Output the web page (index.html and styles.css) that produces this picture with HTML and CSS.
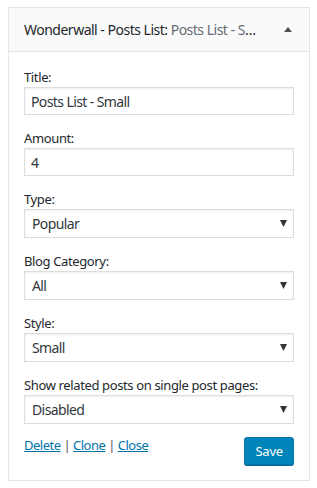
FILE: index.html
```html
<!DOCTYPE html>
<html lang="en">
<head>
    <meta charset="UTF-8">
    <meta name="viewport" content="width=device-width, initial-scale=1.0">
    <title>Posts List widget</title>
    <link rel="stylesheet" href="styles.css">
</head>
<body>
    <div class="widget">
        <div class="widget-top">
            <h3 class="widget-title">Wonderwall - Posts List:<span class="in-title"> Posts List - Small</span></h3>
            <span class="toggle"></span>
        </div>
        <div class="widget-inside">
            <div class="field">
                <label for="title">Title:</label>
                <input class="text-input" id="title" type="text" value="Posts List - Small">
            </div>
            <div class="field">
                <label for="amount">Amount:</label>
                <input class="text-input" id="amount" type="text" value="4">
            </div>
            <div class="field">
                <label for="type">Type:</label>
                <div class="select-wrap">
                    <select id="type">
                        <option>Popular</option>
                        <option>Recent</option>
                    </select>
                </div>
            </div>
            <div class="field">
                <label for="category">Blog Category:</label>
                <div class="select-wrap">
                    <select id="category">
                        <option>All</option>
                    </select>
                </div>
            </div>
            <div class="field">
                <label for="style">Style:</label>
                <div class="select-wrap">
                    <select id="style">
                        <option>Small</option>
                        <option>Large</option>
                    </select>
                </div>
            </div>
            <div class="field">
                <label for="related">Show related posts on single post pages:</label>
                <div class="select-wrap">
                    <select id="related">
                        <option>Disabled</option>
                        <option>Enabled</option>
                    </select>
                </div>
            </div>
            <div class="actions">
                <div class="links">
                    <a href="#">Delete</a> | <a href="#">Clone</a> | <a href="#">Close</a>
                </div>
                <button class="button-primary">Save</button>
            </div>
        </div>
    </div>
</body>
</html>
```

FILE: styles.css
```css
body {
    margin: 0;
    background-color: #fff;
    font-family: "Noto Sans", "Open Sans", sans-serif;
    font-size: 13px;
    letter-spacing: -0.37px;
    color: #23282d;
}
.widget {
    width: 300px;
    margin: 7px 0 0 8px;
    border: 1px solid #e5e5e5;
    background-color: #fff;
    box-shadow: 0 1px 1px rgba(0, 0, 0, 0.04);
}
.widget-top {
    display: flex;
    align-items: center;
    height: 43px;
    padding: 0 15px;
    background-color: #fafafa;
    border-bottom: 1px solid #e5e5e5;
}
.widget-title {
    flex: 1;
    min-width: 0;
    margin: 0;
    font-size: 14px;
    font-weight: 400;
    letter-spacing: -0.5px;
    color: #23282d;
    white-space: nowrap;
    overflow: hidden;
    text-overflow: ellipsis;
    padding-right: 27px;
}
.in-title {
    color: #666d74;
}
.toggle {
    width: 8px;
    height: 5px;
    margin-right: 2px;
    background-color: #4b535b;
    clip-path: polygon(50% 0, 100% 100%, 0 100%);
}
.widget-inside {
    padding: 15px 15px 15px;
}
.field {
    margin-bottom: 13px;
}
.field label {
    display: block;
    line-height: 20px;
}
.text-input,
.select-wrap select {
    display: block;
    box-sizing: border-box;
    width: 100%;
    margin: 0;
    border: 1px solid #ddd;
    border-radius: 0;
    box-shadow: inset 0 1px 2px rgba(0, 0, 0, 0.07);
    background-color: #fff;
    font-family: inherit;
    font-size: 14px;
    letter-spacing: -0.6px;
    color: #32373c;
    outline: none;
}
.text-input {
    height: 28px;
    padding: 0 6px;
}
.select-wrap {
    position: relative;
}
.select-wrap select {
    height: 29px;
    padding: 0 24px 0 7px;
    -webkit-appearance: none;
    appearance: none;
}
.select-wrap::after {
    content: "";
    position: absolute;
    right: 7px;
    top: 11px;
    width: 7px;
    height: 7px;
    background-color: #333;
    clip-path: polygon(0 0, 100% 0, 50% 100%);
    pointer-events: none;
}
.actions {
    display: flex;
    justify-content: space-between;
    align-items: flex-start;
    margin-top: -2px;
}
.links {
    line-height: 20px;
    letter-spacing: -0.5px;
    color: #555;
}
.links a {
    color: #0073aa;
}
.button-primary {
    height: 28px;
    margin-top: 2px;
    padding: 0 10px;
    border: 1px solid #0073aa;
    border-radius: 3px;
    background-color: #0085ba;
    box-shadow: 0 1px 0 #006799;
    font-family: inherit;
    font-size: 13px;
    letter-spacing: -0.2px;
    color: #fff;
    cursor: pointer;
}
```
